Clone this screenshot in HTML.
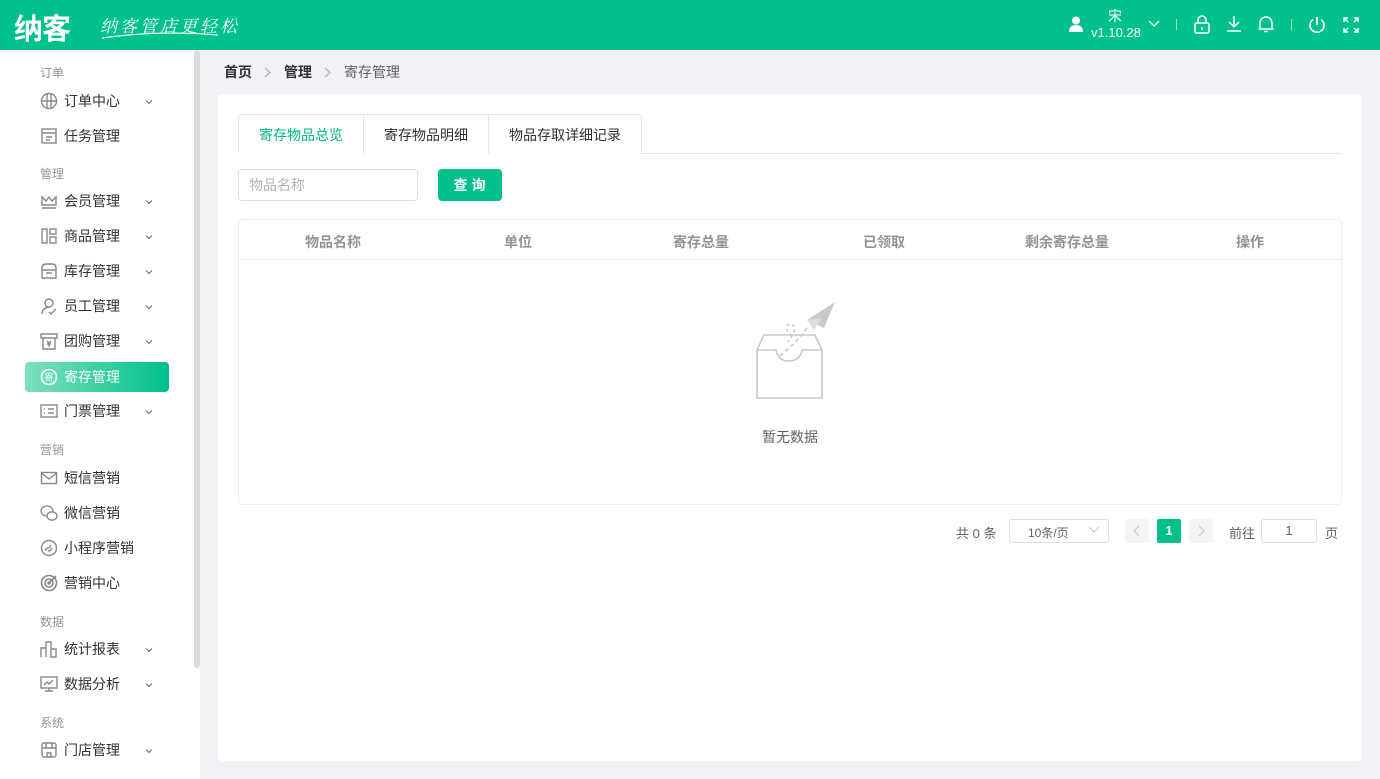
<!DOCTYPE html>
<html><head><meta charset="utf-8"><style>
*{margin:0;padding:0;box-sizing:border-box}
body{width:1380px;height:779px;overflow:hidden;background:#f0f2f5;font-family:"Liberation Sans","Noto Sans CJK SC",sans-serif;position:relative;color:#303133}
.hdr{position:absolute;left:0;top:0;width:1380px;height:50px;background:#00c08b}
.side{position:absolute;left:0;top:50px;width:200px;height:729px;background:#fff}
.sb{position:absolute;left:194px;top:50px;width:6px;height:618px;background:#dcdcdc;border-radius:3px}
.grp{position:absolute;left:40px;font-size:12px;color:#909399}
.it{position:absolute;left:25px;width:144px;height:28px;font-size:14px;color:#303133}
.it .ic{position:absolute;left:15px;top:5px;width:18px;height:18px}
.it .tx{position:absolute;left:39px;top:4px;line-height:20px}
.it .ch{position:absolute;left:118px;top:9px;width:12px;height:12px}
.act{background:linear-gradient(90deg,#7ee0bf,#00c08b);border-radius:4px}
.act .tx{color:#fff}
.card{position:absolute;left:218px;top:94px;width:1144px;height:667px;background:#fff;border-radius:4px}
.hd{position:absolute;top:232px;font-size:14px;font-weight:bold;color:#909399}
</style></head><body>
<div class="hdr">
 <div style="position:absolute;left:14px;top:6px;font-size:29px;font-weight:bold;color:#fff;letter-spacing:-1px">纳客</div>
 <div style="position:absolute;left:100px;top:12px;font-size:17px;color:#fff;letter-spacing:3px;font-family:'Noto Serif CJK SC',serif;font-style:italic">纳客管店更轻松</div>
 <svg style="position:absolute;left:100px;top:30px" width="120" height="10"><path d="M2 8 Q60 0 118 5" stroke="#fff" fill="none" stroke-width="1.2"/></svg>
 <svg style="position:absolute;left:1068px;top:16px" width="16" height="16"><circle cx="8" cy="4.5" r="4" fill="#fff"/><path d="M1 16 Q1 9 8 9 Q15 9 15 16Z" fill="#fff"/></svg>
 <div style="position:absolute;left:1108px;top:6px;font-size:14px;color:#fff">宋</div>
 <div style="position:absolute;left:1091px;top:25px;font-size:13px;color:#fff">v1.10.28</div>
 <svg style="position:absolute;left:1148px;top:20px" width="12" height="8"><path d="M1 1 L6 6 L11 1" stroke="#fff" fill="none" stroke-width="1.3"/></svg>
 <div style="position:absolute;left:1176px;top:19px;width:1px;height:11px;background:#9ee6cd"></div>
 <svg style="position:absolute;left:1193px;top:15px" width="18" height="20" fill="none" stroke="#fff" stroke-width="1.5"><rect x="2" y="8" width="14" height="10" rx="1.5"/><path d="M5 8V5a4 4 0 0 1 8 0v3M9 12v3"/></svg>
 <svg style="position:absolute;left:1225px;top:15px" width="18" height="18" fill="none" stroke="#fff" stroke-width="1.5"><path d="M9 1v11M4 7l5 5 5-5M2 16h14"/></svg>
 <svg style="position:absolute;left:1257px;top:15px" width="18" height="19" fill="none" stroke="#fff" stroke-width="1.5"><path d="M3 14V8a6 6 0 0 1 12 0v6H1.5h15M7 16.5h4"/></svg>
 <div style="position:absolute;left:1291px;top:19px;width:1px;height:11px;background:#9ee6cd"></div>
 <svg style="position:absolute;left:1307px;top:15px" width="20" height="20" fill="none" stroke="#fff" stroke-width="1.6"><path d="M10 2v8M6 4.5a7 7 0 1 0 8 0"/></svg>
 <svg style="position:absolute;left:1342px;top:16px" width="18" height="18" fill="none" stroke="#fff" stroke-width="1.5"><path d="M2 6V2h4M2 2l4 4M16 6V2h-4M16 2l-4 4M2 12v4h4M2 16l4-4M16 12v4h-4M16 16l-4-4"/></svg>
</div>
<div class="side"></div>
<div class="sb"></div>
<div class="grp" style="top:64px">订单</div>
<div class="grp" style="top:165px">管理</div>
<div class="grp" style="top:441px">营销</div>
<div class="grp" style="top:613px">数据</div>
<div class="grp" style="top:714px">系统</div>
<div class="it" style="top:87px"><svg class="ic" viewBox="0 0 18 18" fill="none" stroke="#888" stroke-width="1.4"><circle cx="9" cy="9" r="7.5"/><path d="M1.5 9h15M7 2v14M11 2v14"/></svg><span class="tx">订单中心</span><svg class="ch" viewBox="0 0 12 12"><path d="M3 4.5l3 3 3-3" stroke="#666" fill="none"/></svg></div>
<div class="it" style="top:122px"><svg class="ic" viewBox="0 0 18 18" fill="none" stroke="#888" stroke-width="1.4"><rect x="2" y="2" width="14" height="14"/><path d="M2 6h14M6 10h6M6 13h4"/></svg><span class="tx">任务管理</span></div>
<div class="it" style="top:187px"><svg class="ic" viewBox="0 0 18 18" fill="none" stroke="#888" stroke-width="1.4"><path d="M2 13V5l4 4 3-4 3 4 4-4v8zM2 16h14"/></svg><span class="tx">会员管理</span><svg class="ch" viewBox="0 0 12 12"><path d="M3 4.5l3 3 3-3" stroke="#666" fill="none"/></svg></div>
<div class="it" style="top:222px"><svg class="ic" viewBox="0 0 18 18" fill="none" stroke="#888" stroke-width="1.4"><rect x="2" y="2" width="5" height="14"/><rect x="10" y="2" width="6" height="5"/><rect x="10" y="10" width="6" height="6"/></svg><span class="tx">商品管理</span><svg class="ch" viewBox="0 0 12 12"><path d="M3 4.5l3 3 3-3" stroke="#666" fill="none"/></svg></div>
<div class="it" style="top:257px"><svg class="ic" viewBox="0 0 18 18" fill="none" stroke="#888" stroke-width="1.4"><path d="M2 8V6q0-4 4-4h6q4 0 4 4v2M2 8h14v8H2zM6 11h6"/></svg><span class="tx">库存管理</span><svg class="ch" viewBox="0 0 12 12"><path d="M3 4.5l3 3 3-3" stroke="#666" fill="none"/></svg></div>
<div class="it" style="top:292px"><svg class="ic" viewBox="0 0 18 18" fill="none" stroke="#888" stroke-width="1.4"><circle cx="9" cy="6" r="4"/><path d="M2 17q0-6 7-7M9 15l2 2 5-5"/></svg><span class="tx">员工管理</span><svg class="ch" viewBox="0 0 12 12"><path d="M3 4.5l3 3 3-3" stroke="#666" fill="none"/></svg></div>
<div class="it" style="top:327px"><svg class="ic" viewBox="0 0 18 18" fill="none" stroke="#888" stroke-width="1.4"><path d="M1 2h16v4H1zM3 6v11h12V6M7 9l2 2 2-2M9 11v4M7 12h4"/></svg><span class="tx">团购管理</span><svg class="ch" viewBox="0 0 12 12"><path d="M3 4.5l3 3 3-3" stroke="#666" fill="none"/></svg></div>
<div class="it act" style="top:362px;height:30px"><svg class="ic" style="top:6px" viewBox="0 0 18 18"><circle cx="9" cy="9" r="7.5" fill="none" stroke="#fff" stroke-width="1.6"/><text x="9" y="12.5" font-size="9" fill="#fff" text-anchor="middle" font-family="Noto Sans CJK SC">寄</text></svg><span class="tx" style="top:5px">寄存管理</span></div>
<div class="it" style="top:397px"><svg class="ic" viewBox="0 0 18 18" fill="none" stroke="#888" stroke-width="1.4"><rect x="1" y="3" width="16" height="12"/><path d="M4 7h1M4 11h1M8 7h6M8 11h6"/></svg><span class="tx">门票管理</span><svg class="ch" viewBox="0 0 12 12"><path d="M3 4.5l3 3 3-3" stroke="#666" fill="none"/></svg></div>
<div class="it" style="top:464px"><svg class="ic" viewBox="0 0 18 18" fill="none" stroke="#888" stroke-width="1.4"><rect x="1.5" y="3.5" width="15" height="11"/><path d="M1.5 4l7.5 6 7.5-6"/></svg><span class="tx">短信营销</span></div>
<div class="it" style="top:499px"><svg class="ic" viewBox="0 0 18 18" fill="none" stroke="#888" stroke-width="1.3"><ellipse cx="7" cy="7" rx="6" ry="5"/><ellipse cx="12" cy="12" rx="5" ry="4.2" fill="#fff"/></svg><span class="tx">微信营销</span></div>
<div class="it" style="top:534px"><svg class="ic" viewBox="0 0 18 18" fill="none" stroke="#888" stroke-width="1.4"><circle cx="9" cy="9" r="7.5"/><path d="M6 12q-1-3 2-3t2-3M8 12q3 0 4-3"/></svg><span class="tx">小程序营销</span></div>
<div class="it" style="top:569px"><svg class="ic" viewBox="0 0 18 18" fill="none" stroke="#888" stroke-width="1.6"><circle cx="9" cy="9" r="7.5"/><circle cx="9" cy="9" r="4"/><circle cx="9" cy="9" r="1"/><path d="M9 9l7-7"/></svg><span class="tx">营销中心</span></div>
<div class="it" style="top:635px"><svg class="ic" viewBox="0 0 18 18" fill="none" stroke="#888" stroke-width="1.4"><path d="M1 17V8h5v9M6 17V2h5v15M11 17V9h5v8z"/></svg><span class="tx">统计报表</span><svg class="ch" viewBox="0 0 12 12"><path d="M3 4.5l3 3 3-3" stroke="#666" fill="none"/></svg></div>
<div class="it" style="top:670px"><svg class="ic" viewBox="0 0 18 18" fill="none" stroke="#888" stroke-width="1.4"><rect x="1" y="2" width="16" height="11"/><path d="M9 13v3M5 16h8M4 10l3-3 2 2 4-4"/></svg><span class="tx">数据分析</span><svg class="ch" viewBox="0 0 12 12"><path d="M3 4.5l3 3 3-3" stroke="#666" fill="none"/></svg></div>
<div class="it" style="top:736px"><svg class="ic" viewBox="0 0 18 18" fill="none" stroke="#888" stroke-width="1.4"><rect x="2" y="2" width="14" height="14" rx="2"/><path d="M2 7h14M6 2v5M12 2v5M7 16v-4h4v4"/></svg><span class="tx">门店管理</span><svg class="ch" viewBox="0 0 12 12"><path d="M3 4.5l3 3 3-3" stroke="#666" fill="none"/></svg></div>
<div style="position:absolute;left:224px;top:63px;font-size:14px;line-height:18px;color:#303133"><b>首页</b><svg width="32" height="12" style="vertical-align:-1px"><path d="M13 2l5 4.5-5 4.5" stroke="#b0b3b8" fill="none" stroke-width="1.2"/></svg><b>管理</b><svg width="32" height="12" style="vertical-align:-1px"><path d="M13 2l5 4.5-5 4.5" stroke="#b0b3b8" fill="none" stroke-width="1.2"/></svg><span style="color:#606266">寄存管理</span></div>
<div class="card"></div>
<div style="position:absolute;left:238px;top:153px;width:1104px;height:1px;background:#e4e7ed"></div>
<div style="position:absolute;left:238px;top:114px;width:404px;height:40px;border:1px solid #e4e7ed;border-bottom:none;border-radius:4px 4px 0 0;background:#fff"></div>
<div style="position:absolute;left:238px;top:153px;width:125px;height:1px;background:#fff"></div>
<div style="position:absolute;left:363px;top:114px;width:1px;height:40px;background:#e4e7ed"></div>
<div style="position:absolute;left:488px;top:114px;width:1px;height:40px;background:#e4e7ed"></div>
<div style="position:absolute;left:259px;top:125px;font-size:14px;color:#00b882">寄存物品总览</div>
<div style="position:absolute;left:384px;top:125px;font-size:14px;color:#303133">寄存物品明细</div>
<div style="position:absolute;left:509px;top:125px;font-size:14px;color:#303133">物品存取详细记录</div>
<div style="position:absolute;left:238px;top:169px;width:180px;height:32px;border:1px solid #dcdfe6;border-radius:4px;font-size:14px;color:#b0b3b8;padding:7px 10px;line-height:16px">物品名称</div>
<div style="position:absolute;left:438px;top:169px;width:64px;height:32px;background:#00c08b;border-radius:4px;color:#fff;font-size:14px;font-weight:bold;text-align:center;line-height:32px;letter-spacing:4px;padding-left:3px">查询</div>
<div style="position:absolute;left:238px;top:219px;width:1104px;height:286px;border:1px solid #ebeef5;border-radius:4px"></div>
<div style="position:absolute;left:239px;top:259px;width:1102px;height:1px;background:#ebeef5"></div>
<div class="hd" style="left:305px">物品名称</div>
<div class="hd" style="left:504px">单位</div>
<div class="hd" style="left:673px">寄存总量</div>
<div class="hd" style="left:863px">已领取</div>
<div class="hd" style="left:1025px">剩余寄存总量</div>
<div class="hd" style="left:1236px">操作</div>
<svg style="position:absolute;left:752px;top:298px" width="90" height="104" fill="none" stroke="#c8c8c8" stroke-width="1.6"><path d="M5 52 L12 37 H63 L70 52 V100 H5 Z M5 52 H24 Q26 63 37 63 Q48 63 50 52 H70"/><path d="M28 58 Q45 44 55 30" stroke-dasharray="4 3"/><path d="M40 38 Q30 28 38 26 Q48 28 36 44" stroke-dasharray="3 3"/><path d="M55 22 L83 4 L72 30 Z" fill="#c8c8c8" stroke="none"/><path d="M55 22 L70 20 L62 32Z" fill="#ddd" stroke="none"/></svg>
<div style="position:absolute;left:762px;top:427px;font-size:14px;color:#606266">暂无数据</div>
<div style="position:absolute;left:956px;top:523px;font-size:13px;color:#606266">共 0 条</div>
<div style="position:absolute;left:1009px;top:519px;width:100px;height:24px;border:1px solid #dcdfe6;border-radius:3px;font-size:12px;color:#606266;padding:4px 0 0 18px">10条/页</div>
<svg style="position:absolute;left:1088px;top:525px" width="12" height="10"><path d="M1 2l5 5 5-5" stroke="#c0c4cc" fill="none"/></svg>
<div style="position:absolute;left:1125px;top:519px;width:24px;height:24px;background:#f4f4f5;border-radius:2px"></div>
<svg style="position:absolute;left:1131px;top:525px" width="12" height="12"><path d="M8 1L3 6l5 5" stroke="#c0c4cc" fill="none"/></svg>
<div style="position:absolute;left:1157px;top:519px;width:24px;height:24px;background:#00c08b;border-radius:2px;color:#fff;font-size:13px;font-weight:bold;text-align:center;line-height:24px">1</div>
<div style="position:absolute;left:1189px;top:519px;width:24px;height:24px;background:#f4f4f5;border-radius:2px"></div>
<svg style="position:absolute;left:1195px;top:525px" width="12" height="12"><path d="M4 1l5 5-5 5" stroke="#c0c4cc" fill="none"/></svg>
<div style="position:absolute;left:1229px;top:523px;font-size:13px;color:#606266">前往</div>
<div style="position:absolute;left:1261px;top:519px;width:56px;height:24px;border:1px solid #dcdfe6;border-radius:3px;font-size:13px;color:#606266;text-align:center;line-height:22px">1</div>
<div style="position:absolute;left:1325px;top:523px;font-size:13px;color:#606266">页</div>
</body></html>
